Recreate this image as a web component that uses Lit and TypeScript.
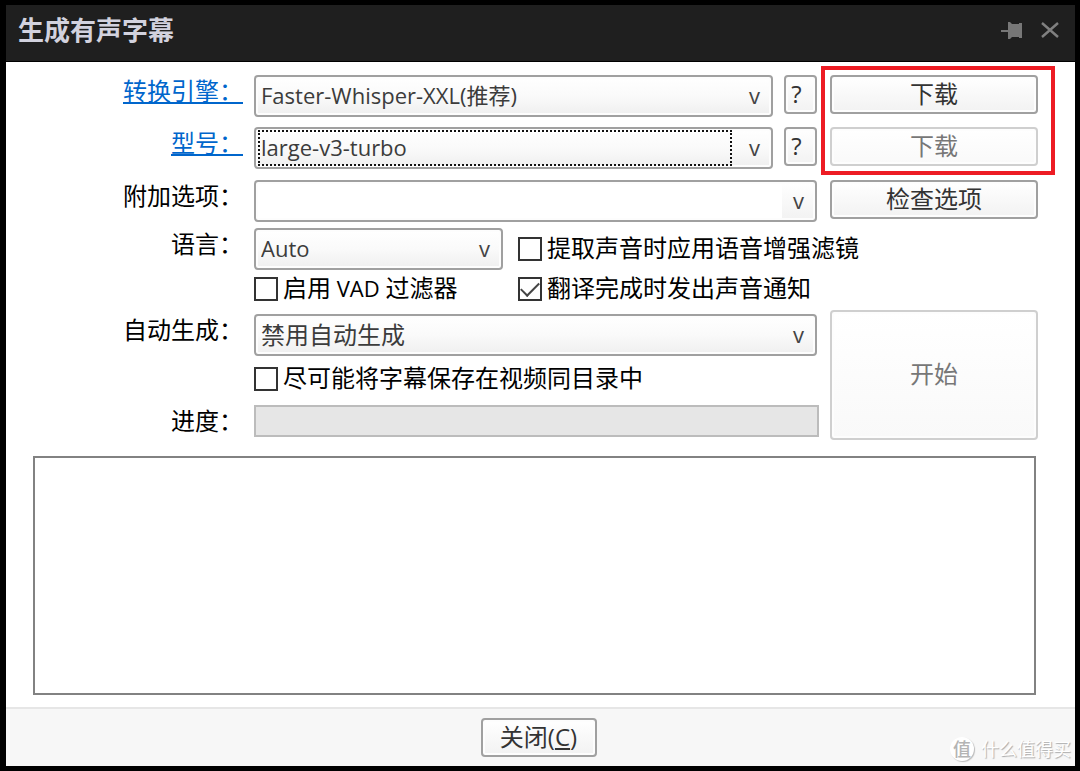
import { LitElement, html, css } from "lit";
import { customElement, property } from "lit/decorators.js";

const controlText = css`
  * {
    box-sizing: border-box;
  }
  button,
  select,
  textarea {
    font-family: "Open Sans", "Noto Sans CJK SC", sans-serif;
    margin: 0;
  }
`;

@customElement("drop-down")
class DropDown extends LitElement {
  @property() value = "";
  @property() label = "";
  @property({ type: Boolean }) editable = false;
  @property({ type: Boolean }) active = false;
  @property({ type: Boolean }) large = false;

  static styles = [
    controlText,
    css`
      :host {
        display: block;
        position: relative;
        height: 42px;
      }
      .box {
        appearance: none;
        display: block;
        width: 100%;
        height: 100%;
        border: 2px solid #a0a0a0;
        border-radius: 4px;
        background: linear-gradient(#ffffff 0%, #fafafa 50%, #efefef 100%);
        box-shadow: inset 0 0 0 2px #fdfdfd;
        color: #3c3c3c;
        font-size: 22px;
        padding: 0 44px 2px 5px;
        outline: none;
      }
      .large {
        font-size: 24px;
      }
      .editable {
        background: linear-gradient(#fff, #fff) left / calc(100% - 33px) 100% no-repeat,
          linear-gradient(#ffffff, #f2f2f2);
      }
      .arrow {
        position: absolute;
        right: 13px;
        top: 5px;
        font-family: "Open Sans", sans-serif;
        font-size: 22px;
        line-height: 30px;
        color: #444;
        pointer-events: none;
      }
      .focus {
        position: absolute;
        inset: 3px 41px 3px 4px;
        border: 2px dotted #111;
        pointer-events: none;
      }
    `,
  ];

  render() {
    return html`
      <select
        class="box ${this.editable ? "editable" : ""} ${this.large ? "large" : ""}"
        aria-label=${this.label}
      >
        <option>${this.value}</option>
      </select>
      ${this.active ? html`<span class="focus"></span>` : ""}
      <span class="arrow" aria-hidden="true">v</span>
    `;
  }
}

@customElement("tick-box")
class TickBox extends LitElement {
  @property({ type: Boolean }) checked = false;

  static styles = [
    controlText,
    css`
      :host {
        display: flex;
        align-items: center;
      }
      .row {
        display: flex;
        align-items: center;
        gap: 5px;
        font-size: 24px;
        line-height: 30px;
        white-space: nowrap;
        color: #000;
      }
      .text {
        padding-bottom: 2px;
      }
      .tick {
        appearance: none;
        flex: none;
        width: 24px;
        height: 24px;
        margin: 0;
        border: 2px solid #333;
        background: #fff;
        display: grid;
        place-items: center;
      }
      .tick:checked::before {
        content: "";
        width: 16px;
        height: 8px;
        margin-top: -4px;
        border: solid #444;
        border-width: 0 0 2px 2px;
        transform: rotate(-45deg);
      }
    `,
  ];

  render() {
    return html`<label class="row"
      ><input class="tick" type="checkbox" .checked=${this.checked} /><span class="text"><slot></slot></span
    ></label>`;
  }
}

@customElement("app-root")
class AppRoot extends LitElement {
  static styles = [
    controlText,
    css`
      :host {
        display: flex;
        flex-direction: column;
        box-sizing: border-box;
        min-height: 100vh;
        border: solid #000;
        border-width: 5px 5px 5px 6px;
        background: #fff;
        color: #000;
        font-family: "Open Sans", "Noto Sans CJK SC", sans-serif;
        font-size: 24px;
        line-height: 30px;
      }
      .title-bar {
        display: flex;
        align-items: center;
        height: 57px;
        padding: 0 15px 6px 12px;
        background: #1f1f1f;
        border-bottom: 1px solid #000;
      }
      .title {
        flex: 1;
        margin: 0;
        font-size: 26px;
        font-weight: 700;
        color: #d2d2de;
      }
      .tool {
        display: block;
        border: 0;
        padding: 0;
        background: none;
        height: 24px;
      }
      .tool + .tool {
        margin-left: 17px;
      }
      .tool svg {
        display: block;
      }
      .content {
        flex: 1;
        display: flex;
        flex-direction: column;
        gap: 16px;
        padding: 13px 39px 12px 27px;
      }
      .upper {
        display: flex;
        gap: 13px;
        margin-right: -2px;
      }
      .form {
        flex: 1;
        min-width: 0;
        display: grid;
        grid-template-columns: 210px minmax(0, 1fr);
        grid-template-rows: 52px 53px 48px 86px 91px 32px;
        column-gap: 11px;
      }
      .label {
        justify-self: end;
        align-self: start;
        line-height: 32px;
        white-space: nowrap;
      }
      .link {
        color: #0066cc;
        text-decoration: underline;
        text-decoration-thickness: 2px;
        text-underline-offset: 2px;
      }
      .with-help {
        display: grid;
        grid-template-columns: minmax(0, 1fr) 33px;
        column-gap: 11px;
        align-items: start;
      }
      .options {
        display: grid;
        grid-template-columns: 249px minmax(0, 1fr);
        grid-template-rows: 42px 38px;
        column-gap: 15px;
      }
      .latin {
        font-size: 22px;
      }
      .auto {
        display: grid;
        grid-template-rows: 42px 46px;
      }
      .progress {
        height: 32px;
        margin-right: -2px;
        border: 2px solid #bcbcbc;
        background: #e6e6e6;
      }
      .actions {
        flex: none;
        width: 208px;
        display: flex;
        flex-direction: column;
        gap: 14px;
      }
      .downloads {
        position: relative;
        display: flex;
        flex-direction: column;
        gap: 13px;
      }
      .highlight {
        position: absolute;
        inset: -9px -17px -9px -9px;
        border: 4px solid #ed1c24;
        pointer-events: none;
      }
      .button {
        height: 39px;
        padding: 0 0 2px;
        border: 2px solid #a0a0a0;
        border-radius: 4px;
        background: linear-gradient(#ffffff, #f2f2f2);
        box-shadow: inset 0 0 0 2px #fdfdfd;
        color: #333;
        font-size: 24px;
        line-height: 30px;
      }
      .button:disabled {
        border-color: #cfcfcf;
        background: linear-gradient(#ffffff, #f9f9f9);
        color: #777;
      }
      .help {
        padding-right: 8px;
      }
      .start {
        height: 130px;
        margin-top: 77px;
      }
      .log {
        flex: 1;
        display: block;
        width: 100%;
        min-height: 120px;
        border: 2px solid #828282;
        resize: none;
        outline: none;
      }
      .footer {
        position: relative;
        display: flex;
        justify-content: center;
        padding: 9px 4px 9px 0;
        background: #f7f7f7;
        border-top: 2px solid #e6e6e6;
      }
      .close {
        width: 116px;
      }
      .watermark {
        position: absolute;
        right: 4px;
        bottom: 5px;
        display: flex;
        align-items: center;
        gap: 7px;
        font-size: 18px;
        line-height: 24px;
        color: #fff;
        text-shadow: 1px 1px 1px #aaa;
      }
      .badge {
        width: 24px;
        height: 24px;
        border-radius: 50%;
        background: #fff;
        box-shadow: 1px 1px 1px #bbb;
        color: #b4b4b4;
        text-align: center;
        text-shadow: none;
        font-weight: 500;
      }
    `,
  ];

  render() {
    return html`
      <header class="title-bar">
        <h1 class="title">生成有声字幕</h1>
        <button class="tool" aria-label="固定">
          <svg width="22" height="24" viewBox="0 0 22 24" fill="#777">
            <path d="M0 12h7V4h2l2 2h7V5h3v15h-3v-1h-7l-2 2H7v-7H0z" />
          </svg>
        </button>
        <button class="tool" aria-label="关闭窗口">
          <svg width="20" height="24" viewBox="0 0 20 24" fill="none" stroke="#808080" stroke-width="2.4">
            <path d="M2 5L18 19M18 5L2 19" />
          </svg>
        </button>
      </header>
      <main class="content">
        <div class="upper">
          <div class="form">
            <a class="label link" href="#engine">转换引擎：</a>
            <div class="with-help">
              <drop-down label="转换引擎" value="Faster-Whisper-XXL(推荐)"></drop-down>
              <button class="button help">?</button>
            </div>
            <a class="label link" href="#model">型号：</a>
            <div class="with-help">
              <drop-down label="型号" value="large-v3-turbo" active></drop-down>
              <button class="button help">?</button>
            </div>
            <span class="label">附加选项：</span>
            <drop-down label="附加选项" editable></drop-down>
            <span class="label">语言：</span>
            <div class="options">
              <drop-down label="语言" value="Auto"></drop-down>
              <tick-box>提取声音时应用语音增强滤镜</tick-box>
              <tick-box>启用<span class="latin"> VAD </span>过滤器</tick-box>
              <tick-box checked>翻译完成时发出声音通知</tick-box>
            </div>
            <span class="label">自动生成：</span>
            <div class="auto">
              <drop-down label="自动生成" value="禁用自动生成" large></drop-down>
              <tick-box>尽可能将字幕保存在视频同目录中</tick-box>
            </div>
            <span class="label">进度：</span>
            <div class="progress" role="progressbar" aria-label="进度" aria-valuenow="0"></div>
          </div>
          <div class="actions">
            <div class="downloads">
              <button class="button">下载</button>
              <button class="button" disabled>下载</button>
              <span class="highlight"></span>
            </div>
            <button class="button">检查选项</button>
            <button class="button start" disabled>开始</button>
          </div>
        </div>
        <textarea class="log" aria-label="日志" readonly></textarea>
      </main>
      <footer class="footer">
        <button class="button close">关闭(<u>C</u>)</button>
        <div class="watermark"><span class="badge">值</span><span>什么值得买</span></div>
      </footer>
    `;
  }
}
